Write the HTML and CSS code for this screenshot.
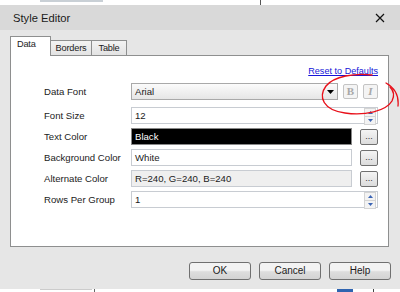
FILE: index.html
```html
<!DOCTYPE html>
<html>
<head>
    <meta charset="UTF-8">
    <title>Style Editor</title>
    <link rel="stylesheet" href="styles.css">
</head>
<body>
    <div class="behind behind-top">
        <span class="ghost-bar"></span>
        <span class="ghost-line"></span>
    </div>

    <div class="dialog">
        <div class="titlebar">
            <span class="title">Style Editor</span>
            <svg class="close" width="10" height="10" viewBox="0 0 10 10">
                <path d="M1 1 L9 9 M9 1 L1 9" stroke="#111" stroke-width="1.2" fill="none"/>
            </svg>
        </div>

        <div class="content">
            <div class="tabs">
                <div class="tab active tab-data">Data</div>
                <div class="tab tab-borders">Borders</div>
                <div class="tab tab-table">Table</div>
            </div>

            <div class="pane">
                <div class="reset"><a href="#">Reset to Defaults</a></div>

                <div class="row row-first">
                    <span class="label">Data Font</span>
                    <div class="field-group">
                        <div class="combo">
                            <span>Arial</span>
                            <svg class="combo-arrow" width="7" height="4" viewBox="0 0 7 4"><path d="M0 0 H7 L3.5 4 Z" fill="#000"/></svg>
                        </div>
                        <div class="style-btn bold">B</div>
                        <div class="style-btn italic">I</div>
                    </div>
                </div>

                <div class="row">
                    <span class="label">Font Size</span>
                    <div class="field spin-field">
                        <span>12</span>
                        <div class="spin">
                            <div class="spin-part"><svg width="5" height="3" viewBox="0 0 5 3"><path d="M0 3 L2.5 0 L5 3 Z" fill="#3b64b4"/></svg></div>
                            <div class="spin-part"><svg width="5" height="3" viewBox="0 0 5 3"><path d="M0 0 H5 L2.5 3 Z" fill="#3b64b4"/></svg></div>
                        </div>
                    </div>
                </div>

                <div class="row">
                    <span class="label">Text Color</span>
                    <div class="field-group">
                        <div class="field swatch-black">Black</div>
                        <div class="dots-btn">...</div>
                    </div>
                </div>

                <div class="row">
                    <span class="label">Background Color</span>
                    <div class="field-group">
                        <div class="field">White</div>
                        <div class="dots-btn">...</div>
                    </div>
                </div>

                <div class="row">
                    <span class="label">Alternate Color</span>
                    <div class="field-group">
                        <div class="field readonly">R=240, G=240, B=240</div>
                        <div class="dots-btn">...</div>
                    </div>
                </div>

                <div class="row">
                    <span class="label">Rows Per Group</span>
                    <div class="field spin-field">
                        <span>1</span>
                        <div class="spin">
                            <div class="spin-part"><svg width="5" height="3" viewBox="0 0 5 3"><path d="M0 3 L2.5 0 L5 3 Z" fill="#3b64b4"/></svg></div>
                            <div class="spin-part"><svg width="5" height="3" viewBox="0 0 5 3"><path d="M0 0 H5 L2.5 3 Z" fill="#3b64b4"/></svg></div>
                        </div>
                    </div>
                </div>
            </div>

            <div class="buttons">
                <div class="btn">OK</div>
                <div class="btn">Cancel</div>
                <div class="btn">Help</div>
            </div>
        </div>
    </div>

    <div class="behind behind-bottom">
        <span class="ghost-box"></span>
        <span class="ghost-line2"></span>
        <span class="ghost-icon"></span>
        <span class="ghost-line3"></span>
    </div>

    <!-- hand drawn annotation round the B / I buttons -->
    <svg class="scribble" width="400" height="292" viewBox="0 0 400 292">
        <path d="M372 75 C355 73, 334 76, 326 86 C318 97, 323 110, 345 113 C365 116, 386 111, 392 101 C395 95, 393 90, 390 87"
              stroke="#e8101a" stroke-width="1.4" fill="none" stroke-linecap="round"/>
        <path d="M386 83 C395 88, 399 96, 398 106"
              stroke="#e8101a" stroke-width="1.3" fill="none" stroke-linecap="round"/>
    </svg>
</body>
</html>
```

FILE: styles.css
```css
body {
    margin: 0;
    width: 400px;
    height: 292px;
    overflow: hidden;
    background: #fff;
    font-family: 'Liberation Sans', Arial, sans-serif;
    font-size: 9.6px;
    color: #1b1b1b;
    position: relative;
}
.behind {
    position: relative;
    background: #fff;
    overflow: hidden;
}
.behind-top {
    height: 5px;
}
.ghost-bar {
    position: absolute;
    left: 40px;
    top: 0;
    width: 63px;
    height: 2px;
    background: #c9d0d6;
}
.ghost-line {
    position: absolute;
    left: 260px;
    top: 0;
    width: 1px;
    height: 5px;
    background: #555;
}
.behind-bottom {
    height: 3px;
}
.ghost-box {
    position: absolute;
    left: 40px;
    top: 0;
    width: 52px;
    height: 3px;
    border-top: 1px solid #ccc;
}
.ghost-line2 {
    position: absolute;
    left: 94px;
    top: 0;
    width: 1px;
    height: 3px;
    background: #666;
}
.ghost-icon {
    position: absolute;
    left: 337px;
    top: 0;
    width: 16px;
    height: 3px;
    background: #2f64b0;
}
.ghost-line3 {
    position: absolute;
    left: 373px;
    top: 0;
    width: 1px;
    height: 3px;
    background: #444;
}

.dialog {
    background: #e6e6e6;
}
.titlebar {
    height: 25px;
    background: #d9d9d9;
    display: flex;
    align-items: center;
    justify-content: space-between;
    padding: 0 15px 0 13px;
}
.title {
    font-size: 11.2px;
    color: #1a1a1a;
}
.close {
    display: block;
}

.content {
    padding: 7px 11px 0 10px;
    height: 252px;
}
.tabs {
    display: flex;
    align-items: flex-end;
    height: 18px;
    position: relative;
    z-index: 1;
}
.tab {
    height: 14px;
    line-height: 14px;
    box-sizing: content-box;
    border: 1px solid #8e8f8f;
    border-bottom: none;
    background: linear-gradient(#f3f3f3, #e3e3e3);
    margin-left: -1px;
    text-align: center;
    font-size: 9.2px;
    letter-spacing: -0.2px;
}
.tab-data {
    width: 39px;
    text-align: left;
    padding-left: 0;
    text-indent: 6px;
    margin-left: 0;
}
.tab-borders {
    width: 40px;
}
.tab-table {
    width: 34px;
}
.tab.active {
    height: 19px;
    line-height: 15px;
    background: #fff;
    margin-bottom: -1px;
    position: relative;
    z-index: 2;
}
.pane {
    height: 181px;
    background: #fff;
    border: 1px solid #8e8f8f;
    padding: 9px 10px 0 33px;
}
.reset {
    text-align: right;
    height: 13px;
    line-height: 13px;
    font-size: 9.1px;
}
.reset a {
    color: #1515d8;
}

.row {
    display: grid;
    grid-template-columns: 87px 1fr;
    align-items: center;
    height: 17px;
    margin-bottom: 4px;
}
.row-first {
    margin-top: 5px;
    margin-bottom: 7px;
}
.field-group {
    display: flex;
    align-items: center;
    height: 17px;
}
.combo {
    flex: 1;
    height: 17px;
    box-sizing: border-box;
    border: 1px solid #a9a9a9;
    background: linear-gradient(#fbfbfb, #e6e6e6);
    display: flex;
    align-items: center;
    justify-content: space-between;
    padding: 0 3px 0 3px;
}
.combo-arrow {
    display: block;
}
.style-btn {
    width: 15px;
    height: 15px;
    box-sizing: border-box;
    margin-left: 5px;
    border: 1px solid #c4c4c4;
    border-radius: 2px;
    background: #f4f4f4;
    color: #a8a8a8;
    font-family: 'Liberation Serif', serif;
    font-size: 11px;
    text-align: center;
    line-height: 13px;
}
.bold {
    font-weight: bold;
}
.italic {
    font-style: italic;
    font-weight: bold;
}
.field {
    flex: 1;
    height: 17px;
    box-sizing: border-box;
    border: 1px solid #c8ccd2;
    background: #fff;
    padding: 0 3px;
    line-height: 15px;
}
.swatch-black {
    background: #000;
    color: #fff;
    border-color: #888;
}
.readonly {
    background: #efefef;
}
.dots-btn {
    width: 18px;
    height: 16px;
    box-sizing: border-box;
    margin-left: 8px;
    border: 1px solid #707070;
    border-radius: 2px;
    background: linear-gradient(#f4f4f4, #dcdcdc);
    text-align: center;
    line-height: 12px;
    font-size: 9px;
    color: #333;
}
.spin-field {
    display: flex;
    align-items: center;
    justify-content: space-between;
    padding-right: 1px;
}
.spin {
    width: 12px;
    display: flex;
    flex-direction: column;
}
.spin-part {
    height: 7px;
    border: 1px solid #d4d4d4;
    margin-bottom: -1px;
    background: #f3f3f3;
    display: flex;
    align-items: center;
    justify-content: center;
}
.spin-part svg {
    display: block;
}

.buttons {
    display: flex;
    justify-content: flex-end;
    gap: 8px;
    margin-top: 15px;
    margin-right: -2px;
}
.btn {
    width: 62px;
    height: 18px;
    box-sizing: border-box;
    border: 1px solid #707070;
    border-radius: 3px;
    background: linear-gradient(#f3f3f3 45%, #dddddd 55%, #d3d3d3);
    text-align: center;
    line-height: 16px;
    font-size: 10px;
}

.scribble {
    position: absolute;
    left: 0;
    top: 0;
    pointer-events: none;
}
```
